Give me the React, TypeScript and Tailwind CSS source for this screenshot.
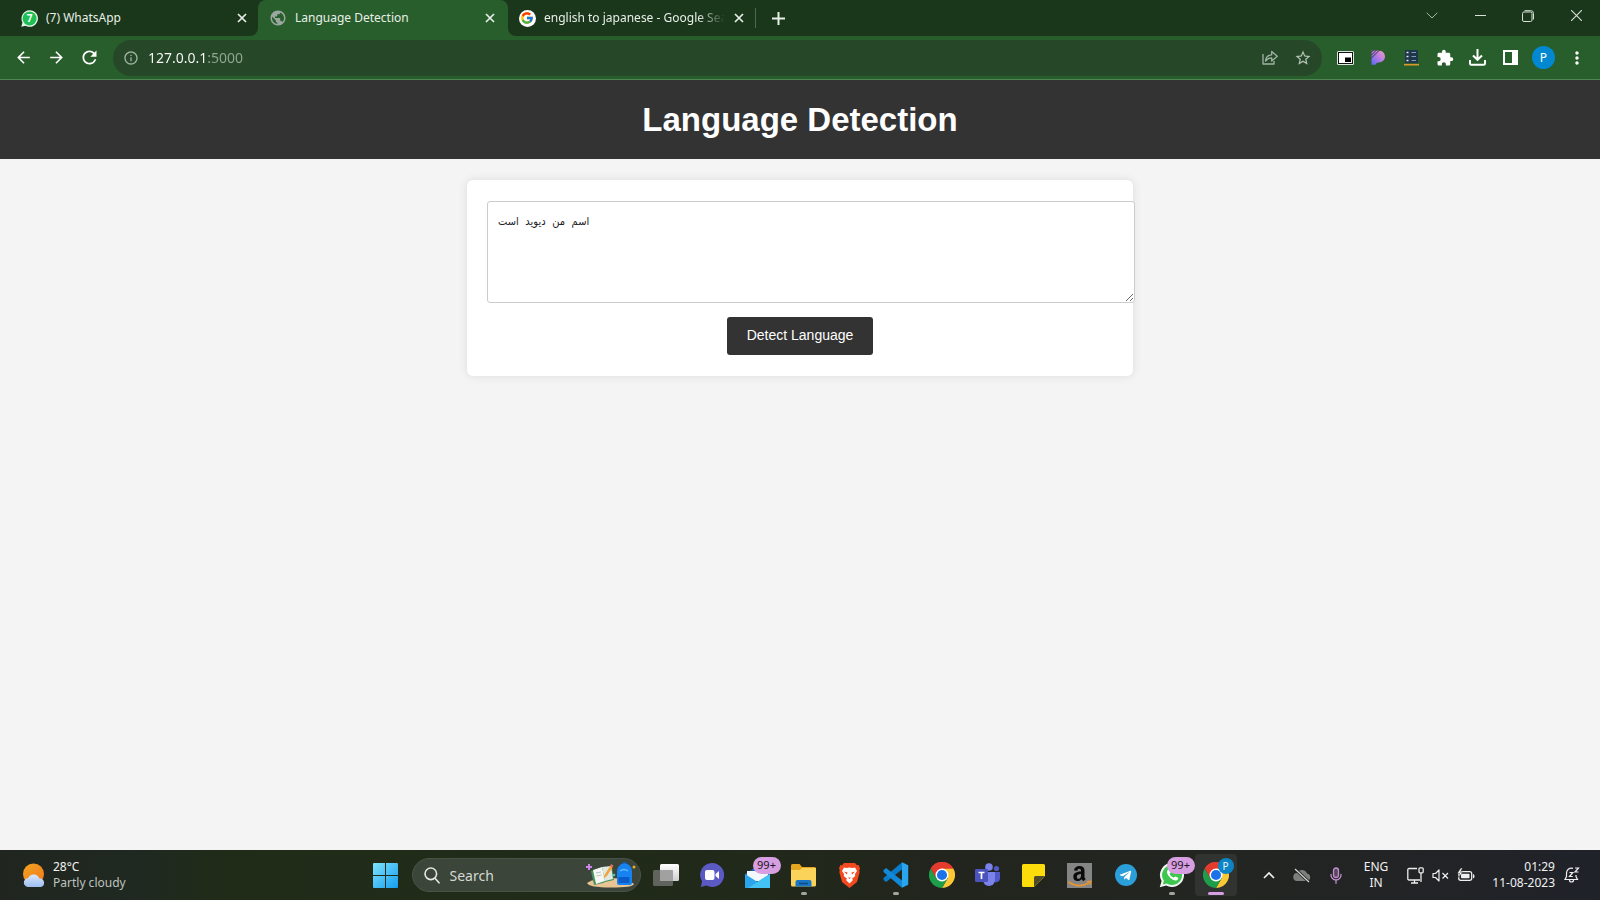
import type { ReactNode } from "react";
import {
  MdArrowBack,
  MdArrowForward,
  MdExtension,
  MdInfoOutline,
  MdMoreVert,
  MdPublic,
  MdRefresh,
  MdStarBorder,
} from "react-icons/md";
import { FcGoogle } from "react-icons/fc";
import { FaTelegramPlane } from "react-icons/fa";

function CloseIcon() {
  return (
    <svg width="10" height="10" viewBox="0 0 10 10" stroke="currentColor" strokeWidth="1.7" fill="none">
      <path d="M1 1l8 8M9 1l-8 8" />
    </svg>
  );
}

function TabBody({ icon, title, fade }: { icon: ReactNode; title: string; fade?: boolean }) {
  return (
    <>
      <span className="flex w-4 shrink-0 justify-center">{icon}</span>
      <span
        className={
          fade
            ? "min-w-0 flex-1 overflow-hidden whitespace-nowrap [mask-image:linear-gradient(to_right,black_85%,transparent)]"
            : "min-w-0 flex-1 truncate"
        }
      >
        {title}
      </span>
      <button aria-label={"Close " + title} className="flex shrink-0 items-center justify-center">
        <CloseIcon />
      </button>
    </>
  );
}

function TabStrip() {
  return (
    <div className="flex h-9 bg-[#1a371b] text-[12px] text-[#e8eee8]">
      <div className="w-[258px] bg-[#285e2b]">
        <div className="flex h-full items-center gap-[9px] rounded-br-lg bg-[#1a371b] pr-[11px] pl-[21px]">
          <TabBody
            title="(7) WhatsApp"
            icon={
              <svg width="17" height="17" viewBox="0 0 17 17" className="shrink-0">
                <path d="M8.500.2a8.300 8.300 0 1 1-4 15.500L.3 16.800l1.200-4.300A8.300 8.300 0 0 1 8.500.2z" fill="#e6f7ea" />
                <circle cx="8.600" cy="8.500" r="7" fill="#1fbf55" />
                <text x="8.500" y="12" textAnchor="middle" fontSize="10" fontWeight="700" fill="#fff" fontFamily="Open Sans, sans-serif">7</text>
              </svg>
            }
          />
        </div>
      </div>
      <div className="w-[250px] bg-[#1a371b]">
        <div className="flex h-full items-center gap-[9px] rounded-t-lg bg-[#285e2b] pr-[13px] pl-3">
          <TabBody title="Language Detection" icon={<MdPublic size={18} className="shrink-0 text-[#9aa6a0]" />} />
        </div>
      </div>
      <div className="w-[247px] bg-[#285e2b]">
        <div className="flex h-full items-center gap-[9px] rounded-bl-lg bg-[#1a371b] pr-[11px] pl-[11px]">
          <TabBody
            fade
            title="english to japanese - Google Search"
            icon={
              <span className="flex size-[17px] shrink-0 items-center justify-center rounded-full bg-white">
                <FcGoogle size={14} />
              </span>
            }
          />
        </div>
      </div>
      <div className="my-2 w-px bg-[#4b6b4c]" />
      <button aria-label="New tab" className="ml-4 flex items-center">
        <svg width="13" height="13" viewBox="0 0 13 13" stroke="currentColor" strokeWidth="2">
          <path d="M6.500 0v13M0 6.500h13" />
        </svg>
      </button>
      <div className="ml-auto flex h-[31px] text-[#d8e0d8]">
        <button aria-label="Search tabs" className="flex w-12 items-center justify-center">
          <svg width="12" height="7" viewBox="0 0 12 7" fill="none" stroke="#a9b8a9"><path d="M.7.8L6 6l5.300-5.200" /></svg>
        </button>
        <button aria-label="Minimize" className="flex w-12 items-center justify-center">
          <svg width="11" height="11" viewBox="0 0 11 11" stroke="currentColor"><path d="M0 5.500h11" /></svg>
        </button>
        <button aria-label="Restore" className="flex w-12 items-center justify-center">
          <svg width="12" height="12" viewBox="0 0 12 12" fill="none" stroke="currentColor">
            <rect x=".5" y="2" width="9.500" height="9.500" rx="1.500" />
            <path d="M2.500.7h6.300a2.700 2.700 0 0 1 2.700 2.700v6.100" />
          </svg>
        </button>
        <button aria-label="Close window" className="flex w-12 items-center justify-center">
          <svg width="11" height="11" viewBox="0 0 11 11" stroke="currentColor" strokeWidth="1.100"><path d="M0 0l11 11M11 0L0 11" /></svg>
        </button>
      </div>
    </div>
  );
}

function ToolButton({ label, children }: { label: string; children: ReactNode }) {
  return (
    <button aria-label={label} className="flex h-9 w-[33px] shrink-0 items-center justify-center">
      {children}
    </button>
  );
}

function Toolbar() {
  return (
    <div className="flex h-11 items-center border-b border-[#4f8553] bg-[#285e2b] px-[7px] text-white">
      <ToolButton label="Back"><MdArrowBack size={19} /></ToolButton>
      <ToolButton label="Forward"><MdArrowForward size={19} /></ToolButton>
      <ToolButton label="Reload"><MdRefresh size={21} /></ToolButton>
      <div className="mx-[7px] flex h-9 min-w-0 flex-1 items-center rounded-full bg-[#264829] pr-[3px] pl-[10px]">
        <MdInfoOutline size={16} className="shrink-0 text-[#9fb3a1]" />
        <input
          aria-label="Address"
          defaultValue="127.0.0.1:5000"
          className="ml-[9px] h-6 min-w-0 flex-1 bg-[linear-gradient(to_right,#ffffff_59px,#93a794_59px)] bg-clip-text text-[14px] text-transparent outline-none"
        />
        <ToolButton label="Share this page">
          <svg width="16" height="15" viewBox="0 0 16 15" fill="none" stroke="#9fb3a1" strokeWidth="1.300" strokeLinejoin="round">
            <path d="M1 4v10h11v-3" />
            <path d="M3.500 11c.3-3.700 2.300-6 6.200-6.200V1.500L15.300 6.300 9.700 11V7.900c-2.800 0-4.500.9-6.200 3.100z" />
          </svg>
        </ToolButton>
        <ToolButton label="Bookmark"><MdStarBorder size={18} className="text-[#b4c4b5]" /></ToolButton>
      </div>
      <ToolButton label="Picture in picture">
        <svg width="17" height="14" viewBox="0 0 17 14">
          <rect width="17" height="14" rx="1.500" fill="#dfe6df" />
          <rect x="1.500" y="1.500" width="14" height="11" fill="#fff" stroke="#111" />
          <rect x="8" y="6.500" width="6" height="4.500" fill="#000" />
        </svg>
      </ToolButton>
      <ToolButton label="Purple extension">
        <svg width="15" height="15" viewBox="0 0 15 15">
          <defs>
            <linearGradient id="pp" x1="1" y1="0" x2="0" y2="1"><stop offset="0" stopColor="#f29cc0" /><stop offset=".5" stopColor="#b57be6" /><stop offset="1" stopColor="#5a6af5" /></linearGradient>
          </defs>
          <path d="M.5.5h7.500a6 6 0 0 1 0 12c-2 0-3 .8-3.600 2.200H.5z" fill="url(#pp)" />
          <path d="M0 5.500L5.500 0M0 8.500L8.500 0M0 2.500L2.500 0" stroke="#33343f" strokeWidth="1" />
        </svg>
      </ToolButton>
      <ToolButton label="List extension">
        <svg width="15" height="16" viewBox="0 0 15 16">
          <rect x="1" width="13" height="13" fill="#20364a" />
          <path d="M2.500 2.500h2M2.500 6.500h2M2.500 10.500h2" stroke="#dce8f2" strokeWidth="1.600" />
          <path d="M7.500 2.500h4.500M7.500 6.500h4.500M7.500 10.500h4.500" stroke="#7f9fb8" />
          <path d="M0 14.700h15" stroke="#d89a2b" strokeWidth="1.600" />
        </svg>
      </ToolButton>
      <ToolButton label="Extensions"><MdExtension size={18} /></ToolButton>
      <ToolButton label="Downloads">
        <svg width="17" height="17" viewBox="0 0 17 17" fill="none" stroke="currentColor" strokeWidth="2">
          <path d="M8.500 0v10M4 6.500l4.500 4.300L13 6.500M1 11v3.500a1.300 1.300 0 0 0 1.300 1.300h12.400a1.300 1.300 0 0 0 1.300-1.300V11" />
        </svg>
      </ToolButton>
      <ToolButton label="Side panel">
        <svg width="15" height="15" viewBox="0 0 15 15"><path d="M0 0h15v15H0zM2 2v11h7V2z" fill="currentColor" fillRule="evenodd" /></svg>
      </ToolButton>
      <ToolButton label="Profile">
        <span className="flex size-[23px] items-center justify-center rounded-full bg-[#0288d1] text-[12px]">P</span>
      </ToolButton>
      <ToolButton label="Menu"><MdMoreVert size={20} /></ToolButton>
    </div>
  );
}

function Page() {
  return (
    <div className="flex flex-1 flex-col bg-[#f4f4f4] font-['Liberation_Sans',Arial,sans-serif]">
      <header className="bg-[#333] py-5 text-center">
        <h1 className="text-[33px] leading-[39px] font-bold text-white">Language Detection</h1>
      </header>
      <main className="mx-auto mt-[21px] w-full max-w-[666px] rounded-md bg-white px-5 py-[21px] shadow-[0_0_10px_rgba(0,0,0,0.1)]">
        <textarea
          aria-label="Text"
          spellCheck={false}
          defaultValue="اسم من دیوید است"
          className="box-content block h-20 w-full resize rounded-[3px] border border-[#ccc] bg-white p-[10px] font-['Liberation_Mono','DejaVu_Sans_Condensed','DejaVu_Sans',monospace] text-[11px] leading-5 text-[#222] outline-none"
        />
        <button className="mx-auto mt-[14px] block h-[38px] rounded-[3px] bg-[#333] px-5 pb-px text-[14px] text-white">
          Detect Language
        </button>
      </main>
    </div>
  );
}

function AppSlot({ label, mark, children }: { label: string; mark?: "idle"; children: ReactNode }) {
  return (
    <button aria-label={label} className="relative flex h-full w-[46px] shrink-0 items-center justify-center">
      {children}
      {mark === "idle" && <span className="absolute bottom-[5px] h-[3px] w-[6px] rounded-full bg-[#a3a5a0]" />}
    </button>
  );
}

function Badge() {
  return (
    <span className="absolute top-[7px] left-[18px] flex h-[17px] w-7 items-center justify-center rounded-full bg-[#d79fe2] text-[11px] text-[#1c1420]">
      99+
    </span>
  );
}

function ChromeLogo() {
  return (
    <svg width="26" height="26" viewBox="0 0 48 48">
      <path d="M24 24L3.200 12A24 24 0 0 1 44.800 12z" fill="#e33b2e" />
      <path d="M24 12h20.800A24 24 0 0 1 24 48l10.400-18z" fill="#fcc934" />
      <path d="M13.600 30L3.200 12A24 24 0 0 0 24 48l10.400-18z" fill="#1e9e4a" />
      <path d="M24 12h20.800A24 24 0 0 0 3.200 12l10.400 18z" fill="#e33b2e" />
      <circle cx="24" cy="24" r="12" fill="#fff" />
      <circle cx="24" cy="24" r="9.300" fill="#1a73e8" />
    </svg>
  );
}

function Taskbar() {
  return (
    <footer className="flex h-[50px] items-center bg-[linear-gradient(to_right,#20261f_0%,#202822_8%,#202c18_14%,#212a1a_45%,#22251d_58%,#232522_78%,#20222a_100%)] text-[#f2f2f2]">
      <div className="flex flex-1 items-center pl-[22px]">
        <button className="flex items-center gap-[7px] text-left text-[12px] leading-4">
          <svg width="24" height="25" viewBox="0 0 24 25">
            <defs>
              <linearGradient id="sun" x1="0" y1="0" x2="1" y2="1"><stop stopColor="#f2a321" /><stop offset="1" stopColor="#f17a1c" /></linearGradient>
              <linearGradient id="cl" x1="0" y1="0" x2="0" y2="1"><stop stopColor="#dbe8fb" /><stop offset="1" stopColor="#9dbdf2" /></linearGradient>
            </defs>
            <circle cx="11.500" cy="11" r="10.500" fill="url(#sun)" />
            <path d="M6.500 24a4.500 4.500 0 0 1-.3-9 6 6 0 0 1 11.200.6A4.300 4.300 0 0 1 19 24z" fill="url(#cl)" />
          </svg>
          <span>
            28°C
            <br />
            <span className="text-[#bfc2be]">Partly cloudy</span>
          </span>
        </button>
      </div>

      <div className="flex h-full items-center pl-[7px]">
        <button aria-label="Start" className="mr-[14px]">
          <svg width="25" height="25" viewBox="0 0 25 25">
            <defs><linearGradient id="win" x1="0" y1="0" x2="1" y2="1"><stop stopColor="#7fe3fc" /><stop offset="1" stopColor="#149df0" /></linearGradient></defs>
            <path d="M1 0h11v12H0V1a1 1 0 0 1 1-1zM13 0h11a1 1 0 0 1 1 1v11H13zM0 13h12v12H1a1 1 0 0 1-1-1zM13 13h12v11a1 1 0 0 1-1 1H13z" fill="url(#win)" />
          </svg>
        </button>
        <div className="flex h-[34px] w-[229px] items-center rounded-full border border-[#4a5246] bg-[#3c4539] pr-1 pl-[11px]">
          <svg width="16" height="17" viewBox="0 0 16 17" fill="none" stroke="#e6e6e6" strokeWidth="1.600" strokeLinecap="round" className="shrink-0">
            <circle cx="6.800" cy="6.800" r="5.800" />
            <path d="M11 11.200l4 4.600" />
          </svg>
          <input aria-label="Search" placeholder="Search" className="ml-[10px] w-0 min-w-0 flex-1 bg-transparent text-[14px] outline-none placeholder:text-[#d5d8d3]" />
          <svg width="50" height="26" viewBox="0 0 50 26" className="shrink-0">
            <path d="M1 21q7-5 24-5t23 6q-1 3.500-23 3.500T1 21z" fill="#e9c495" />
            <path d="M5 9l11-3 3 1 7-2 2 13-9 2-2 1-9 2z" fill="#4b8f5d" />
            <path d="M7 8l9-3 3 14-9 3z" fill="#f4f7f3" />
            <path d="M16 5l9-1 2 13-8 2z" fill="#dfe9e2" />
            <path d="M10 11l5-1M10.500 14l5-1" stroke="#b6c2b9" />
            <path d="M18 14l6-10 2.500 1.500-6 9-3 1.500z" fill="#f2a33a" />
            <path d="M24 4l1-2 2.500 1.500-1 2z" fill="#e36b5f" />
            <rect x="36" y="0" width="5" height="5" rx="2" fill="#0d5fc4" />
            <path d="M31 21V9a7.500 7.500 0 0 1 15 0v12q0 2-2 2H33q-2 0-2-2z" fill="#1783f2" />
            <path d="M32.500 15h11v6h-11z" fill="#0a5cc9" />
            <path d="M34 9q4-3 8 0" stroke="#62b9ff" strokeWidth="1.500" fill="none" />
            <path d="M3 2v6M0 5h6" stroke="#c986e8" strokeWidth="2" />
            <circle cx="48" cy="5" r="1.500" fill="#f0a928" />
            <circle cx="28" cy="13" r="1.300" fill="#4ecbc4" />
          </svg>
        </div>
        <nav aria-label="Taskbar apps" className="ml-[2px] flex h-full">
          <AppSlot label="Task view">
            <svg width="26" height="24" viewBox="0 0 26 24">
              <defs><linearGradient id="tv" x1="0" y1="0" x2="0" y2="1"><stop stopColor="#fff" /><stop offset="1" stopColor="#cfcfcf" /></linearGradient></defs>
              <rect x="7" y="1" width="19" height="17" rx="1.500" fill="url(#tv)" />
              <rect x="0" y="7" width="20" height="16" rx="1.500" fill="#6b6d6b" opacity=".85" />
              <path d="M7 7h13v11H7z" fill="#aaa" opacity=".8" />
            </svg>
          </AppSlot>
          <AppSlot label="Chat">
            <svg width="24" height="24" viewBox="0 0 24 24">
              <path d="M12 0a12 12 0 1 1-5.500 22.600L.8 24l1.300-5.500A12 12 0 0 1 12 0z" fill="#5b59c4" />
              <rect x="5" y="7" width="9.500" height="10" rx="2" fill="#fff" />
              <path d="M15.500 11l3.500-3v8l-3.500-3z" fill="#fff" />
            </svg>
          </AppSlot>
          <AppSlot label="Mail">
            <svg width="25" height="22" viewBox="0 0 25 22" className="mt-1">
              <path d="M0 8L12.500 0 25 8v14H0z" fill="#1466b8" />
              <path d="M2 5h21v10H2z" fill="#f2f7fb" />
              <path d="M0 8l12.500 8L25 8v14H0z" fill="#2aa4ea" />
              <path d="M25 8v14H3z" fill="#43c3f5" />
            </svg>
            <Badge />
          </AppSlot>
          <AppSlot label="File Explorer" mark="idle">
            <svg width="25" height="23" viewBox="0 0 25 23">
              <path d="M0 1.500A1.500 1.500 0 0 1 1.500 0h7l2.500 3h12.500A1.500 1.500 0 0 1 25 4.500V12H0z" fill="#e5a520" />
              <path d="M0 6h9l2-2h14v17a1.500 1.500 0 0 1-1.500 1.500h-22A1.500 1.500 0 0 1 0 21z" fill="#fbd35a" />
              <path d="M4.500 22.500V18a2 2 0 0 1 2-2h12a2 2 0 0 1 2 2v4.500z" fill="#1976c5" />
              <path d="M8 19.500h9" stroke="#0c4a86" strokeWidth="1.500" />
            </svg>
          </AppSlot>
          <AppSlot label="Brave">
            <svg width="21" height="25" viewBox="0 0 21 25">
              <path d="M5 0h11l2 2.300 1.700-.3L21 5.500l-.8 2 .5 1.500-2.700 10L10.500 25 3 19 .3 9l.5-1.500-.8-2L1.300 2l1.700.3z" fill="#f4481f" />
              <path d="M5 4.500l2.500.5 3-.6 3 .6 2.500-.5L18 8l-2 3 .2 2-3.200 2.700 1 1.300-3.500 3.500L7 17l1-1.300L4.800 13l.2-2-2-3z" fill="#fff" />
              <path d="M5 8.500l3.500 1-.5 2zM16 8.500l-3.500 1 .5 2zM9 14.500h3l-1.500 1.500z" fill="#f4481f" />
            </svg>
          </AppSlot>
          <AppSlot label="Visual Studio Code" mark="idle">
            <svg width="26" height="26" viewBox="0 0 100 100">
              <path d="M73 1L97 12.500V87.500L73 99z" fill="#2aa6ee" />
              <path d="M73 1v28L12 77 2 69v-7z" fill="#0a7bc8" />
              <path d="M73 99V71L12 23 2 31v7z" fill="#1289d8" />
            </svg>
          </AppSlot>
          <AppSlot label="Google Chrome"><ChromeLogo /></AppSlot>
          <AppSlot label="Microsoft Teams">
            <svg width="26" height="24" viewBox="0 0 26 24">
              <circle cx="21.500" cy="5.500" r="2.600" fill="#5059c9" />
              <path d="M18 9h7v6.500a4 4 0 0 1-7 2.500z" fill="#5059c9" />
              <circle cx="14" cy="4" r="3.800" fill="#7b83eb" />
              <path d="M8 9h12v8a6 6 0 0 1-12 0z" fill="#7b83eb" />
              <rect y="6" width="13" height="13" rx="1.200" fill="#4b53bc" />
              <path d="M3.500 9.500h6M6.500 9.500v6.500" stroke="#fff" strokeWidth="1.700" />
            </svg>
          </AppSlot>
          <AppSlot label="Sticky Notes">
            <svg width="23" height="23" viewBox="0 0 23 23">
              <path d="M0 1.500A1.500 1.500 0 0 1 1.500 0h20A1.500 1.500 0 0 1 23 1.500V12L12 23H1.500A1.500 1.500 0 0 1 0 21.500z" fill="#fddc0c" />
              <path d="M12 23V13.500a1.500 1.500 0 0 1 1.500-1.500H23z" fill="#4f4a2c" />
            </svg>
          </AppSlot>
          <AppSlot label="Amazon">
            <span className="flex size-[25px] items-center justify-center bg-[#858585]">
              <svg width="25" height="25" viewBox="0 0 25 25">
                <path d="M7 7.600C7.300 4.500 9.500 3 12.500 3c3.300 0 5 1.500 5 4.500v6.300c0 1 .5 1.500 1.300 2.200l-2.400 2.200c-.8-.6-1.400-1.200-1.800-2-2.800 3.200-8.300 2.300-8.300-2.200 0-4.200 3.700-5.300 7.700-5.400 0-2-.3-2.900-1.800-2.900-1.100 0-1.800.7-2 2zm7 3.300c-2.500 0-4.200.8-4.200 3 0 2.700 3.800 2.600 4.200-1z" fill="#0b0b0b" fillRule="evenodd" />
                <path d="M1.500 19q10.500 7 21 .5" fill="none" stroke="#e8942f" strokeWidth="1.700" />
                <path d="M20 18.500l4-.4-1 3.900" fill="none" stroke="#e8942f" strokeWidth="1.200" />
              </svg>
            </span>
          </AppSlot>
          <AppSlot label="Telegram">
            <span className="flex size-[22px] items-center justify-center rounded-full bg-[#2a9fda] text-white">
              <FaTelegramPlane size={13} />
            </span>
          </AppSlot>
          <AppSlot label="WhatsApp" mark="idle">
            <svg width="26" height="26" viewBox="0 0 26 26">
              <path d="M13 1a12 12 0 1 1-5.800 22.500L.8 25.200l1.800-6.200A12 12 0 0 1 13 1z" fill="#f4f7f4" />
              <path d="M13 3a10 10 0 1 1-5.200 18.500L3.800 22.500l1.100-3.800A10 10 0 0 1 13 3z" fill="#3fc651" />
              <path d="M9.300 7.500c-2.300 1.700-1.300 5 1.700 8s6.300 4 7.900 1.700c.5-.8.400-1.300-.3-1.700l-2-1c-.8-.4-1.300 1.300-2 1.100-1.600-.5-3.300-2.200-3.900-3.700-.2-.6 1.300-1.200.9-2l-.9-2c-.3-.7-.8-.8-1.400-.4z" fill="#fff" />
            </svg>
            <Badge />
          </AppSlot>
          <button aria-label="Google Chrome, profile P" className="relative flex h-[42px] w-[42px] items-center justify-center self-center rounded bg-[#30332f]">
            <ChromeLogo />
            <span className="absolute top-1 right-[3px] flex size-4 items-center justify-center rounded-full bg-[#0b85c6] text-[10px]">P</span>
            <span className="absolute bottom-px h-[3px] w-4 rounded-full bg-[#d79fe2]" />
          </button>
        </nav>
      </div>

      <div className="flex flex-1 items-center justify-end pr-[20px]">
        <button aria-label="Show hidden icons" className="mr-[18px]">
          <svg width="12" height="8" viewBox="0 0 12 8" fill="none" stroke="#eee" strokeWidth="1.700"><path d="M1 7l5-5 5 5" /></svg>
        </button>
        <svg width="18" height="15" viewBox="0 0 18 15" className="mr-[19px]">
          <path d="M4.500 13a4 4 0 0 1-.5-8A5.500 5.500 0 0 1 14 5.500 3.800 3.800 0 0 1 14 13z" fill="#7c7f7c" />
          <path d="M2 1l14 13" stroke="#232522" strokeWidth="3" />
          <path d="M2 1l14 13" stroke="#d5d5d5" strokeWidth="1.200" />
        </svg>
        <svg width="12" height="17" viewBox="0 0 12 17" fill="none" stroke="#c18fce" strokeWidth="1.300" strokeLinecap="round" className="mr-[22px]">
          <rect x="3.500" y="1" width="5" height="9.500" rx="2.500" fill="#5d4763" />
          <path d="M1 7.500v.5a5 5 0 0 0 10 0v-.5M6 13v3.300" />
        </svg>
        <button className="mr-[19px] text-center text-[12px] leading-4">
          ENG
          <br />
          IN
        </button>
        <button aria-label="Network, sound and battery" className="mr-[17px] flex items-center gap-2">
          <svg width="17" height="17" viewBox="0 0 17 17" fill="none" stroke="#eee" strokeWidth="1.300">
            <path d="M10 1.500H2a1.200 1.200 0 0 0-1.200 1.200v9A1.200 1.200 0 0 0 2 13h11M4 16h7M7.500 13v3" />
            <rect x="12" y=".8" width="4.200" height="5" rx="1" />
            <path d="M14 6v9" />
          </svg>
          <svg width="17" height="13" viewBox="0 0 17 13" fill="none" stroke="#eee" strokeWidth="1.200" strokeLinejoin="round">
            <path d="M1 4.500h2.500L7 1v11L3.500 8.500H1zM10.500 4l5.500 5.500M16 4l-5.500 5.500" />
          </svg>
          <svg width="18" height="14" viewBox="0 0 18 14">
            <rect x="1.700" y="3.700" width="13" height="8.600" rx="2" fill="none" stroke="#eee" strokeWidth="1.300" />
            <rect x="4" y="5.800" width="8.500" height="4.500" rx=".8" fill="#eee" />
            <path d="M16 6v4.500q1.500-.5 1.500-2.200T16 6z" fill="#eee" />
            <path d="M3.800 0L.3 5.300h2.200L1.200 9.500 6 4.200H3.500L5.500 0z" fill="#fff" stroke="#232522" strokeWidth=".5" />
          </svg>
        </button>
        <button className="mr-[9px] text-right text-[12px] leading-4">
          01:29
          <br />
          11-08-2023
        </button>
        <svg width="16" height="16" viewBox="0 0 16 16" fill="none" stroke="#eee" strokeWidth="1.200">
          <path d="M9 1.300C5 .6 2.500 3 2.500 6.500v3L1 12.500h12.500L12 9.500V8M5.500 13a2 2 0 0 0 4 0" />
          <path d="M5.500 5.500h3.300L5.500 9.500h3.300M11 1h3.500L11 5h3.500" />
        </svg>
      </div>
    </footer>
  );
}

export default function App() {
  return (
    <div className="flex min-h-screen flex-col font-['Noto_Sans','Open_Sans',sans-serif]">
      <TabStrip />
      <Toolbar />
      <Page />
      <Taskbar />
    </div>
  );
}
